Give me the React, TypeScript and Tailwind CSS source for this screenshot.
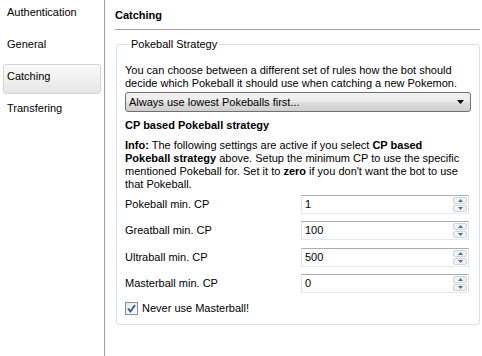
import React from "react";

const sideItems = ["Authentication", "General", "Catching", "Transfering"];

const rows = [
  { label: "Pokeball min. CP", value: "1", mt: "mt-[4px]" },
  { label: "Greatball min. CP", value: "100", mt: "mt-[7px]" },
  { label: "Ultraball min. CP", value: "500", mt: "mt-[8px]" },
  { label: "Masterball min. CP", value: "0", mt: "mt-[7px]" },
];

function Spinner() {
  return (
    <div className="my-[1px] mr-[1px] flex w-[14px] flex-col gap-[1px]">
      <div className="flex h-[7px] items-center justify-center rounded-[2px] border border-[#ccd5df] bg-[#eef2f6]">
        <svg width="5" height="3" viewBox="0 0 5 3">
          <path d="M0 3 L2.5 0 L5 3 Z" fill="#5d6b7d" />
        </svg>
      </div>
      <div className="flex h-[7px] items-center justify-center rounded-[2px] border border-[#ccd5df] bg-[#eef2f6]">
        <svg width="5" height="3" viewBox="0 0 5 3">
          <path d="M0 0 L2.5 3 L5 0 Z" fill="#5d6b7d" />
        </svg>
      </div>
    </div>
  );
}

export default function App() {
  return (
    <div className="flex h-[356px] w-[482px] bg-white font-['Liberation_Sans',Arial,sans-serif] text-[11px] leading-[13px] text-black">
      {/* Sidebar */}
      <div className="w-[105px] shrink-0 border-r border-[#a0a0a0]">
        {sideItems.map((item) => (
          <div
            key={item}
            className={`mx-[3px] mb-[2px] flex h-[30px] items-center pb-[5px] pl-[3px] ${
              item === "Catching"
                ? "rounded-[3px] border border-[#d4d4d4] bg-[linear-gradient(to_bottom,#fafafa,#e6e6e6)]"
                : "border border-transparent"
            }`}
          >
            {item}
          </div>
        ))}
      </div>

      {/* Content */}
      <div className="flex-1 pl-[10px] pr-[2px]">
        <div className="h-[30px] border-b border-[#a0a0a0] pt-[9px] font-bold">Catching</div>

        <fieldset className="ml-[1px] mt-[8px] rounded-[3px] border border-[#d5dfe5] pb-[9px] pl-[8px] pr-[8px] pt-[13px]">
          <legend className="ml-[4px] px-[2px]">Pokeball Strategy</legend>

          <p className="whitespace-nowrap">
            You can choose between a different set of rules how the bot should
            <br />
            decide which Pokeball it should use when catching a new Pokemon.
          </p>

          <div className="mt-[2px] flex h-[20px] items-center justify-between rounded-[3px] border border-[#707070] bg-[linear-gradient(to_bottom,#f2f2f2_0%,#ebebeb_50%,#dddddd_50%,#cfcfcf_100%)] pl-[3px] pr-[6px]">
            <span>Always use lowest Pokeballs first...</span>
            <svg width="7" height="4" viewBox="0 0 7 4">
              <path d="M0 0 L7 0 L3.5 4 Z" fill="#000" />
            </svg>
          </div>

          <div className="mt-[7px] font-bold">CP based Pokeball strategy</div>

          <p className="mt-[7px] whitespace-nowrap">
            <b>Info:</b> The following settings are active if you select <b>CP based</b>
            <br />
            <b>Pokeball strategy</b> above. Setup the minimum CP to use the specific
            <br />
            mentioned Pokeball for. Set it to <b>zero</b> if you don't want the bot to use
            <br />
            that Pokeball.
          </p>

          {rows.map((r) => (
            <div key={r.label} className={`flex h-[19px] items-center ${r.mt}`}>
              <div className="w-[176px] shrink-0">{r.label}</div>
              <div className="mr-[2px] flex h-full flex-1 items-stretch justify-between border border-[#abadb3] border-b-[#e3e9ef] border-l-[#e2e3ea] border-r-[#dbdfe6]">
                <span className="flex items-center pl-[3px]">{r.value}</span>
                <Spinner />
              </div>
            </div>
          ))}

          <label className="mt-[9px] flex items-center gap-[4px]">
            <span className="flex h-[13px] w-[13px] items-center justify-center border border-[#8e8f8f] bg-[linear-gradient(to_bottom_right,#dde9f5,#f8fbfe)]">
              <svg width="9" height="9" viewBox="0 0 9 9">
                <path d="M1 4.5 L3.5 7.5 L8 1" stroke="#3b5592" strokeWidth="1.8" fill="none" />
              </svg>
            </span>
            <span>Never use Masterball!</span>
          </label>
        </fieldset>
      </div>
    </div>
  );
}
